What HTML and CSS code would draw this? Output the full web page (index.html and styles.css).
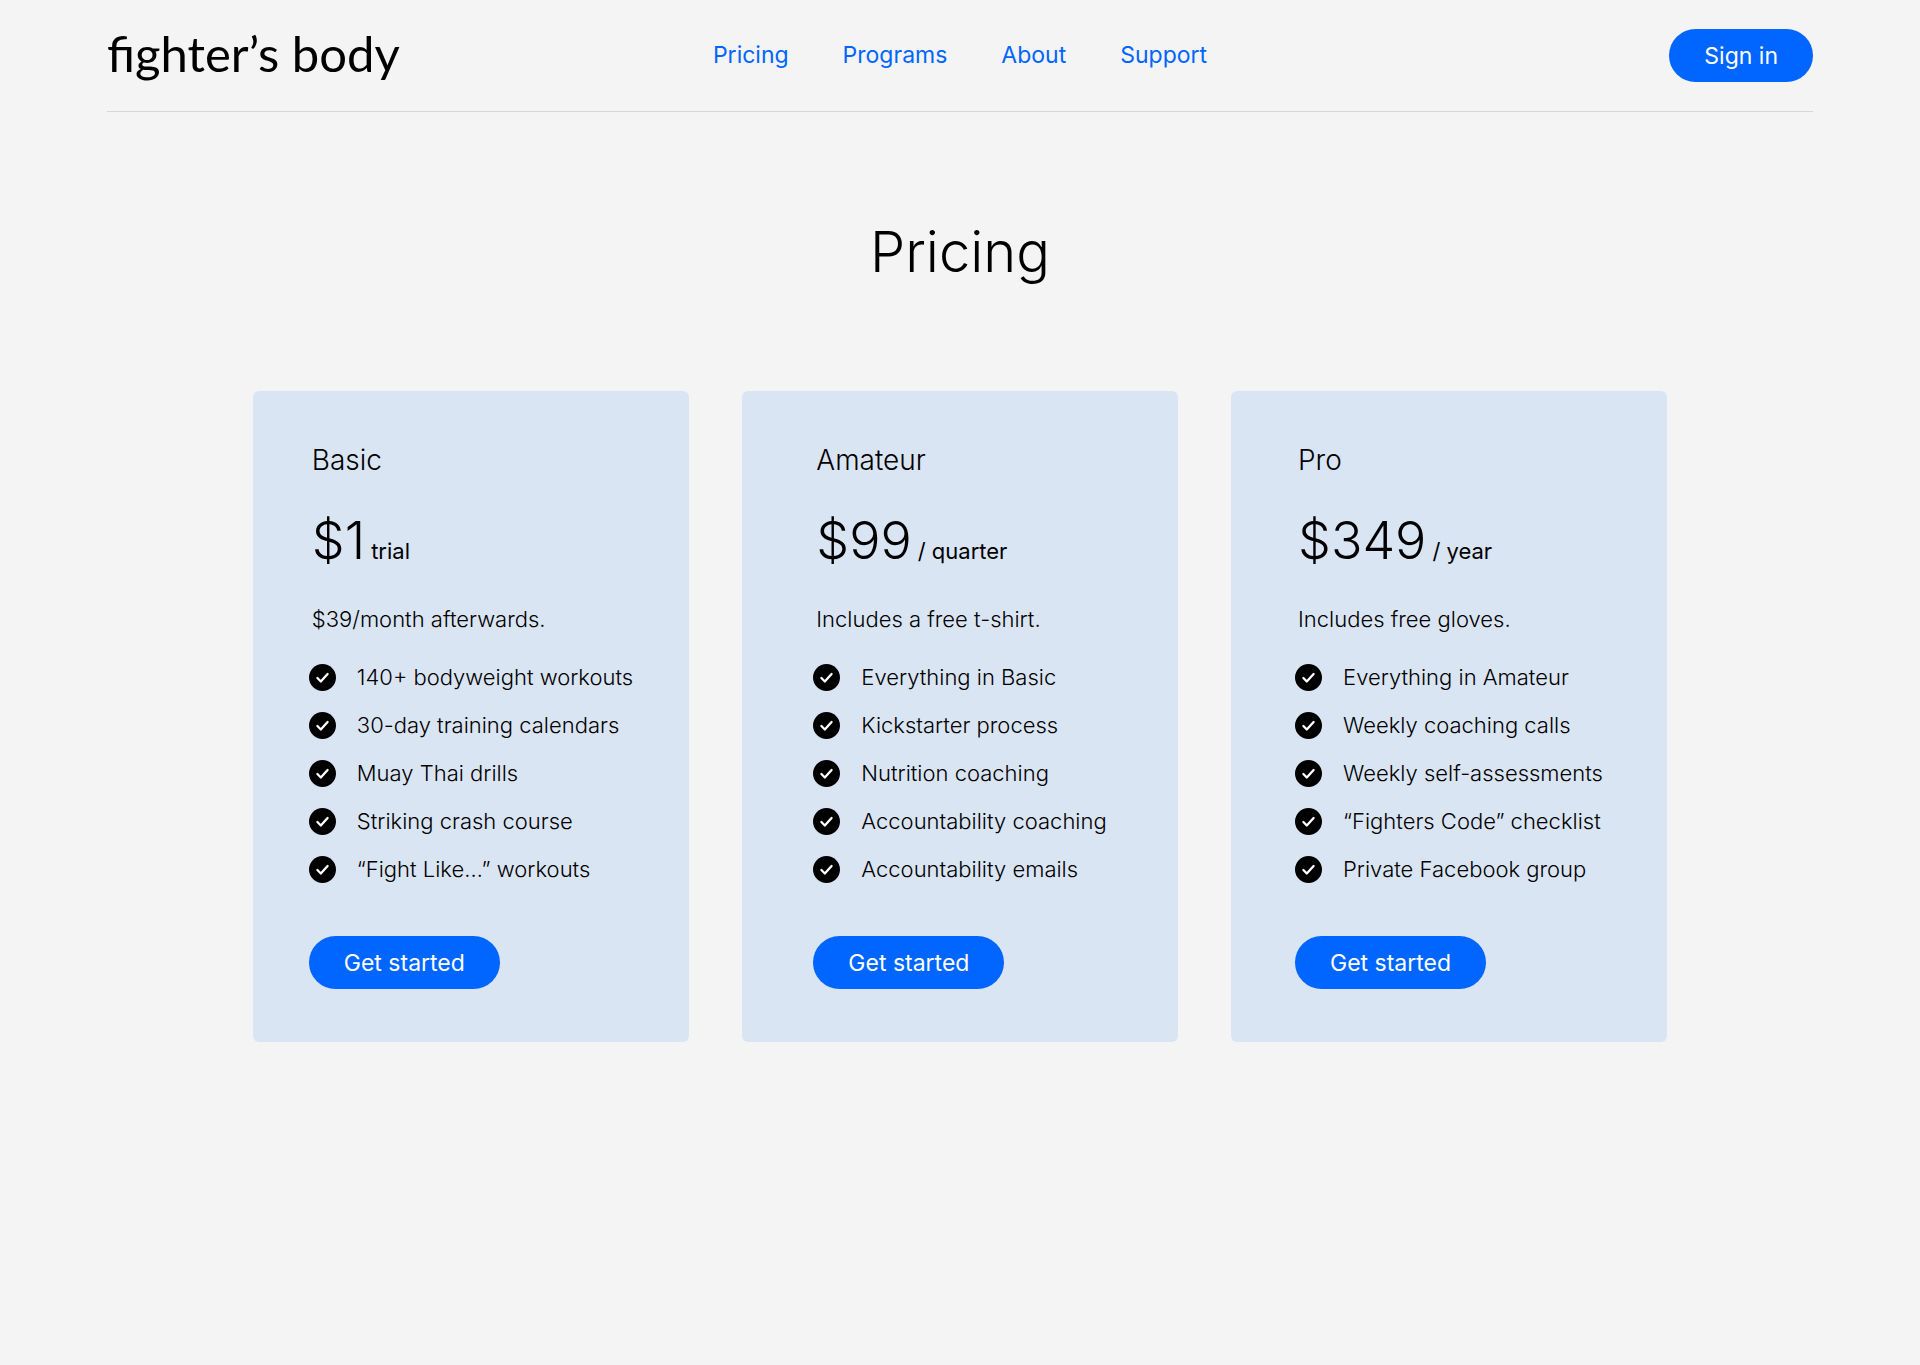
FILE: index.html
```html
<!DOCTYPE html>
<html lang="en">
<head>
<meta charset="utf-8">
<meta name="viewport" content="width=device-width, initial-scale=1">
<title>Pricing – fighter’s body</title>
<link rel="stylesheet" href="styles.css">
</head>
<body>
<svg class="sprite" aria-hidden="true">
  <symbol id="check" viewBox="0 0 27 27">
    <circle cx="13.5" cy="13.5" r="13.5" fill="#000"/>
    <path d="M8.4 14l3.4 3.5 6.8-7.5" fill="none" stroke="#fff" stroke-width="2.3" stroke-linecap="round" stroke-linejoin="round"/>
  </symbol>
</svg>
<header class="site-header">
  <a class="logo" href="#">fighter’s body</a>
  <nav class="nav">
    <a href="#">Pricing</a>
    <a href="#">Programs</a>
    <a href="#">About</a>
    <a href="#">Support</a>
  </nav>
  <button class="button sign-in" type="button">Sign in</button>
</header>
<main>
  <h1 class="page-title">Pricing</h1>
  <div class="plans">
    <section class="plan">
      <div class="plan-body">
        <h2 class="plan-name">Basic</h2>
        <p class="price"><span class="amount">$1</span> <span class="period">trial</span></p>
        <p class="note">$39/month afterwards.</p>
        <ul class="features">
          <li><svg class="check"><use href="#check"/></svg>140+ bodyweight workouts</li>
          <li><svg class="check"><use href="#check"/></svg>30-day training calendars</li>
          <li><svg class="check"><use href="#check"/></svg>Muay Thai drills</li>
          <li><svg class="check"><use href="#check"/></svg>Striking crash course</li>
          <li><svg class="check"><use href="#check"/></svg>“Fight Like…” workouts</li>
        </ul>
        <button class="button" type="button">Get started</button>
      </div>
    </section>
    <section class="plan">
      <div class="plan-body">
        <h2 class="plan-name">Amateur</h2>
        <p class="price"><span class="amount">$99</span> <span class="period">/ quarter</span></p>
        <p class="note">Includes a free t-shirt.</p>
        <ul class="features">
          <li><svg class="check"><use href="#check"/></svg>Everything in Basic</li>
          <li><svg class="check"><use href="#check"/></svg>Kickstarter process</li>
          <li><svg class="check"><use href="#check"/></svg>Nutrition coaching</li>
          <li><svg class="check"><use href="#check"/></svg>Accountability coaching</li>
          <li><svg class="check"><use href="#check"/></svg>Accountability emails</li>
        </ul>
        <button class="button" type="button">Get started</button>
      </div>
    </section>
    <section class="plan">
      <div class="plan-body">
        <h2 class="plan-name">Pro</h2>
        <p class="price"><span class="amount">$349</span> <span class="period">/ year</span></p>
        <p class="note">Includes free gloves.</p>
        <ul class="features">
          <li><svg class="check"><use href="#check"/></svg>Everything in Amateur</li>
          <li><svg class="check"><use href="#check"/></svg>Weekly coaching calls</li>
          <li><svg class="check"><use href="#check"/></svg>Weekly self-assessments</li>
          <li><svg class="check"><use href="#check"/></svg>“Fighters Code” checklist</li>
          <li><svg class="check"><use href="#check"/></svg>Private Facebook group</li>
        </ul>
        <button class="button" type="button">Get started</button>
      </div>
    </section>
  </div>
</main>
</body>
</html>
```

FILE: styles.css
```css
* {
  box-sizing: border-box;
  margin: 0;
  padding: 0;
}

body {
  background: #f4f4f4;
  color: #000;
  font-family: Inter, "Open Sans", sans-serif;
  font-size: 22px;
  line-height: 27px;
}

.sprite {
  display: none;
}

.site-header {
  display: grid;
  grid-template-columns: 1fr auto 1fr;
  align-items: center;
  margin: 0 107px;
  padding: 29px 0;
  border-bottom: 1px solid #d6d6d6;
}

.logo {
  justify-self: start;
  padding-bottom: 5px;
  color: #000;
  font-family: Lato, sans-serif;
  font-size: 49px;
  line-height: 48px;
  text-decoration: none;
}

.nav {
  display: flex;
  gap: 54px;
}

.nav a {
  color: #0066ff;
  font-size: 23px;
  text-decoration: none;
}

.button {
  height: 53px;
  padding: 0 35px;
  border: 0;
  border-radius: 27px;
  background: #0066ff;
  color: #fff;
  font-family: inherit;
  font-size: 23px;
  white-space: nowrap;
  cursor: pointer;
}

.sign-in {
  justify-self: end;
}

.page-title {
  margin: 108px 0 107px;
  font-size: 56px;
  font-weight: 300;
  line-height: 64px;
  text-align: center;
}

.plans {
  display: flex;
  flex-wrap: wrap;
  justify-content: center;
  gap: 53px;
}

.plan {
  display: flex;
  justify-content: center;
  width: 436px;
  padding: 53px 0;
  border-radius: 6px;
  background: #dae5f4;
}

.plan-name,
.price,
.note {
  padding-left: 3px;
}

.plan-name {
  font-size: 28px;
  font-weight: 300;
  line-height: 32px;
}

.price {
  display: flex;
  align-items: baseline;
  gap: 6px;
  margin: 33px 0;
}

.amount {
  font-size: 52px;
  font-weight: 300;
  line-height: 64px;
}

.note,
.features {
  font-weight: 350;
}

.features {
  display: grid;
  gap: 21px;
  margin: 31px 0 53px;
  list-style: none;
}

.features li {
  display: flex;
  align-items: center;
  gap: 21px;
}

.check {
  flex: none;
  width: 27px;
  height: 27px;
}
```
